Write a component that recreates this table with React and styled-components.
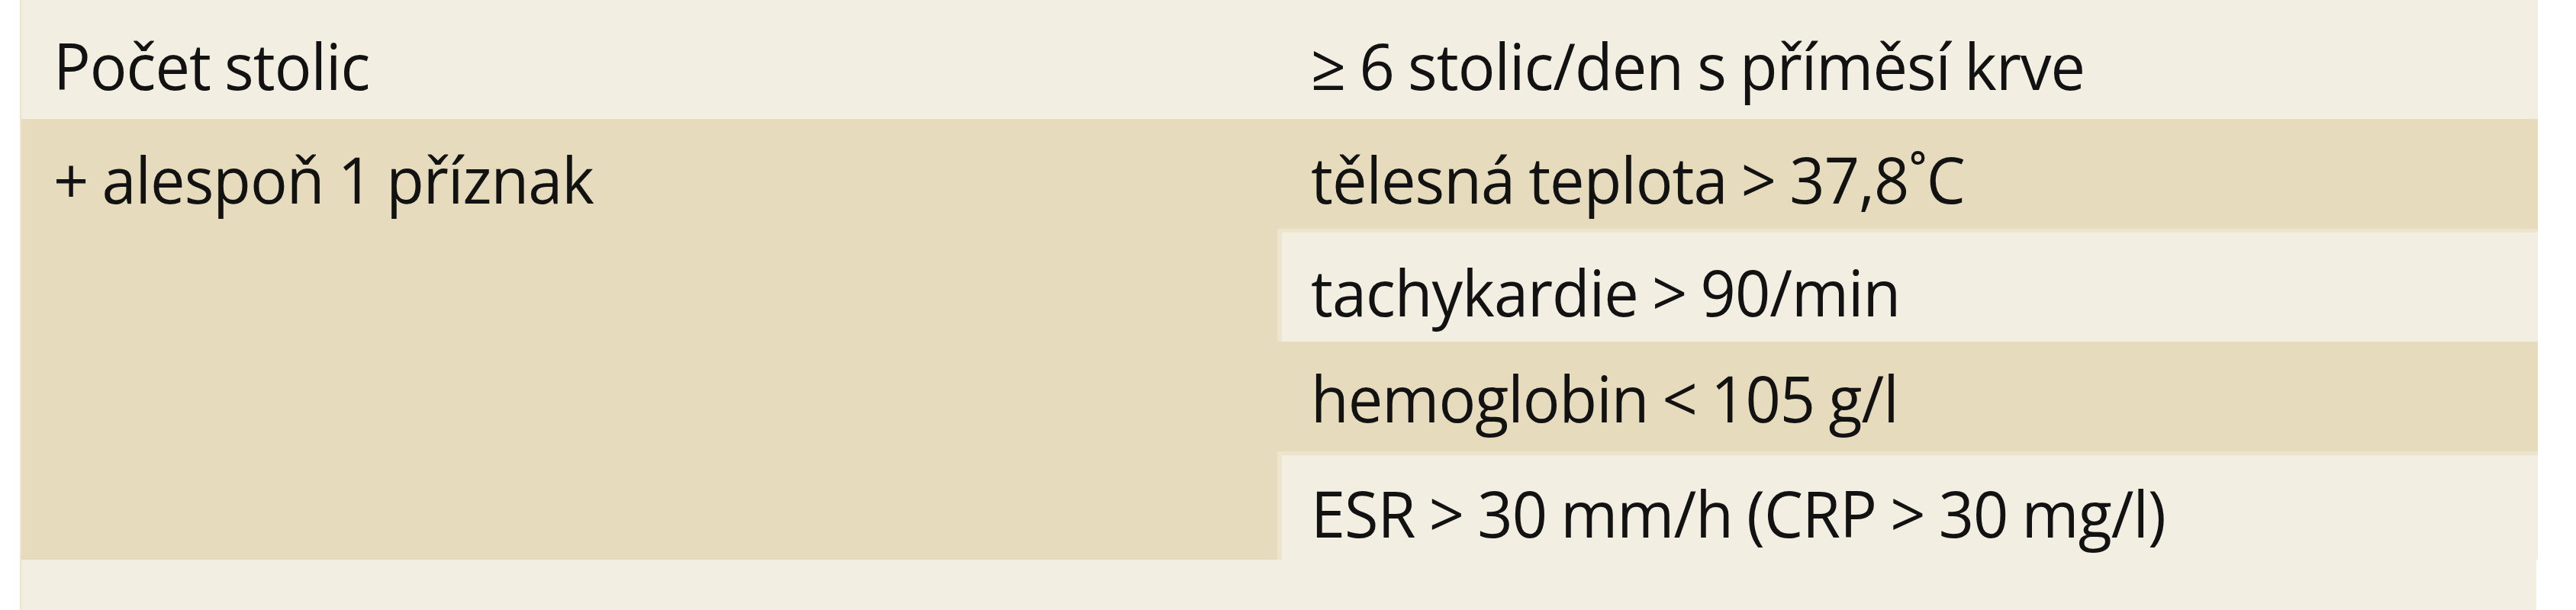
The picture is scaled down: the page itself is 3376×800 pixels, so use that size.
// Import React Libraries
import React from 'react';

// Import Style
import styled, { createGlobalStyle } from 'styled-components';

const light = '#f3eee2';
const dark = '#e6dbbc';
const seam = '#ece4cb';

const GlobalStyle = createGlobalStyle`
  html, body {
    margin: 0;
    padding: 0;
    background: #ffffff;
  }
  body {
    font-family: "Open Sans", "Noto Sans", sans-serif;
    color: #121212;
  }
`;

const Page = styled.div`
  width: 3376px;
  height: 800px;
  overflow: hidden;
  background: #ffffff;
`;

const Table = styled.div`
  margin-left: 26px;
  width: 3298px;
  padding-bottom: 66px;
  background: ${light};
  display: grid;
  grid-template-columns: 1646px 1652px;
  grid-template-rows: 156px 144px 148px 144px 142px;
  border-left: 2px solid ${seam};
  box-sizing: border-box;
`;

const Cell = styled.div`
  background: ${({ $tone }) => ($tone === 'dark' ? dark : light)};
  grid-row: ${({ $span }) => ($span ? `span ${$span}` : 'auto')};
  padding: ${({ $top }) => $top}px 0 0 ${({ $left }) => $left}px;
  border-left: ${({ $edged }) => ($edged ? `6px solid ${seam}` : 'none')};
  border-top: ${({ $seamTop }) => ($seamTop ? `5px solid ${seam}` : 'none')};
  box-sizing: border-box;
  min-width: 0;
`;

const Label = styled.span`
  display: inline-block;
  font-size: 84px;
  line-height: 84px;
  font-weight: 400;
  letter-spacing: -1px;
  word-spacing: -2px;
  white-space: nowrap;
  transform: scaleX(0.965);
  transform-origin: 0 0;
`;

const rows = [
  { text: '≥ 6 stolic/den s příměsí krve', tone: 'light', top: 44 },
  { text: 'tělesná teplota > 37,8˚C', tone: 'dark', top: 37 },
  { text: 'tachykardie > 90/min', tone: 'light', top: 36, edged: true, seamTop: true },
  { text: 'hemoglobin < 105 g/l', tone: 'dark', top: 32 },
  { text: 'ESR > 30 mm/h (CRP > 30 mg/l)', tone: 'light', top: 34, edged: true, seamTop: true },
];

function App () {
  return (
    <Page>
      <GlobalStyle/>
      <Table>
        <Cell $tone='light' $top={44} $left={42}>
          <Label>Počet stolic</Label>
        </Cell>
        <Cell $tone={rows[0].tone} $top={rows[0].top} $left={44}>
          <Label>{rows[0].text}</Label>
        </Cell>
        <Cell $tone='dark' $span={4} $top={37} $left={42}>
          <Label>+ alespoň 1 příznak</Label>
        </Cell>
        {rows.slice(1).map((row) => (
          <Cell
            key={row.text}
            $tone={row.tone}
            $top={row.top}
            $left={row.edged ? 38 : 44}
            $edged={row.edged}
            $seamTop={row.seamTop}
          >
            <Label>{row.text}</Label>
          </Cell>
        ))}
      </Table>
    </Page>
  );
}

export default App;
